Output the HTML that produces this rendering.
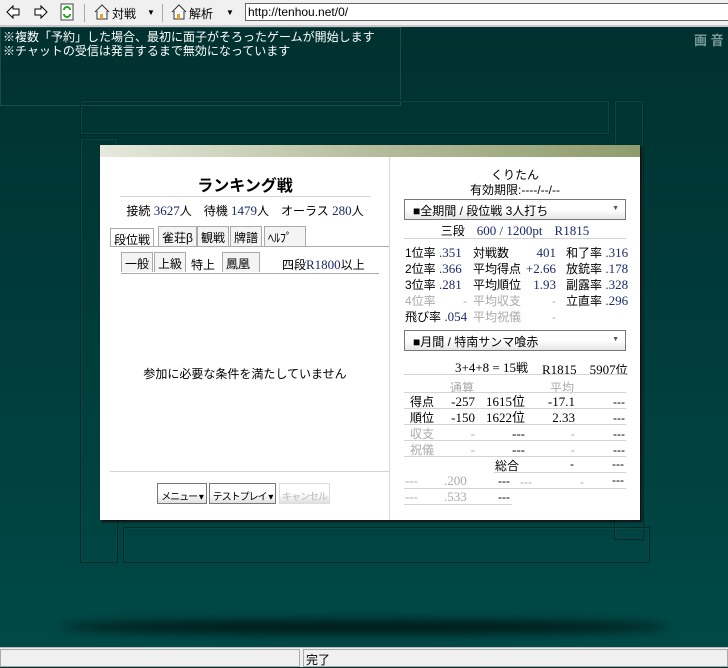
<!DOCTYPE html>
<html><head><meta charset="utf-8"><style>
*{margin:0;padding:0;box-sizing:border-box}
body{width:728px;height:667px;overflow:hidden;position:relative;font-family:"Liberation Sans","Noto Sans CJK JP",sans-serif;font-size:12px;background:linear-gradient(#00302f,#003c3a 50%,#004a48)}
.a{position:absolute;white-space:nowrap}
.tb{position:absolute;left:0;top:0;width:728px;height:27px;background:#f0f0f0;border-bottom:2px solid #c8c8c8}
.url{position:absolute;left:245px;top:3px;width:483px;height:18px;background:#fff;border:1px solid #666;border-right:none;font-size:12px;padding:1px 2px}
.chat{position:absolute;left:0;top:27px;width:401px;height:79px;border:1px solid #1f4a46;color:#fff;font-size:12px;line-height:14px;padding:2px 2px}
.frm{position:absolute;border:1px solid #002a28;box-shadow:inset 0 0 0 1px #0a4644}
.panel{position:absolute;left:100px;top:145px;width:540px;height:375px;background:#fff;box-shadow:2px 2px 2px #111}
.hd{position:absolute;left:0;top:0;width:540px;height:12px;background:linear-gradient(90deg,#e6e9dc,#b4bd9c 50%,#8f9c6c)}
.n{color:#1a2a6a;font-family:"Liberation Serif",serif;font-size:13px}
.ln{position:absolute;height:1px;background:#d4d4d4}
.sel{position:absolute;height:21px;border:1px solid #777;background:linear-gradient(#fff,#fff 50%,#e6e6e6);padding:2px 8px;font-size:12px}
.sel:after{content:"▼";position:absolute;right:6px;top:5px;font-size:7px;color:#555}
.g{color:#aaa}
.s{font-family:"Liberation Serif",serif;font-size:13px}
.tab{position:absolute;top:226px;height:20px;border:1px solid #aaa;border-bottom:none;background:#f4f4f4;padding:2px 3px;font-size:12px}
.btn{position:absolute;top:483px;height:21px;border:1px solid #777;background:linear-gradient(#fff,#fff 50%,#e0e0e0);font-size:10px;padding:4px 0;text-align:center;white-space:nowrap;letter-spacing:-1px;overflow:hidden}
.status{position:absolute;left:0;top:647px;width:728px;height:20px;background:#f0f0f0;border-top:1px solid #bbb}
</style></head><body>
<div class="tb">
<svg class="a" style="left:6px;top:5px" width="14" height="14"><path d="M1 7L7 1V4H13V10H7V13Z" fill="#fff" stroke="#000"/></svg>
<svg class="a" style="left:34px;top:5px" width="14" height="14"><path d="M13 7L7 1V4H1V10H7V13Z" fill="#fff" stroke="#000"/></svg>
<svg class="a" style="left:60px;top:3px" width="14" height="18"><rect x="1" y="1" width="12" height="16" fill="#fff" stroke="#444"/><path d="M4 7a3 3 0 0 1 6 0M10 11a3 3 0 0 1-6 0" stroke="#2a2" stroke-width="2" fill="none"/></svg>
<div class="a" style="left:84px;top:4px;width:1px;height:18px;background:#aaa"></div>
<svg class="a" style="left:94px;top:4px" width="16" height="16"><path d="M1 8L8 1L15 8M3 7V15H13V7" fill="#fff" stroke="#333"/><rect x="6" y="10" width="3" height="5" fill="#e8a020"/></svg>
<div class="a" style="left:112px;top:5px;font-size:12px">対戦</div><div class="a" style="left:147px;top:8px;font-size:8px">▼</div>
<div class="a" style="left:162px;top:4px;width:1px;height:18px;background:#aaa"></div>
<svg class="a" style="left:171px;top:4px" width="16" height="16"><path d="M1 8L8 1L15 8M3 7V15H13V7" fill="#fff" stroke="#333"/><rect x="6" y="10" width="3" height="5" fill="#e8a020"/></svg>
<div class="a" style="left:189px;top:5px;font-size:12px">解析</div><div class="a" style="left:226px;top:8px;font-size:8px">▼</div>
<div class="url">http://tenhou.net/0/</div>
</div>
<div class="chat">※複数「予約」した場合、最初に面子がそろったゲームが開始します<br>※チャットの受信は発言するまで無効になっています</div>
<div class="a" style="left:694px;top:30px;color:#7a9a96;font-size:13px;font-weight:bold">画 音</div>
<div class="frm" style="left:80px;top:100px;width:530px;height:35px"></div>
<div class="frm" style="left:614px;top:100px;width:30px;height:440px"></div>
<div class="frm" style="left:80px;top:138px;width:38px;height:425px"></div>
<div class="frm" style="left:123px;top:527px;width:527px;height:36px"></div>
<div class="a" style="left:60px;top:620px;width:610px;height:14px;border-radius:50%;background:#001a18;filter:blur(5px)"></div>
<div class="panel"><div class="hd"></div>
<div class="a" style="left:289px;top:12px;width:1px;height:363px;background:#d8d8d8"></div></div>
<!-- left -->
<div class="a" style="left:120px;top:172px;width:250px;text-align:center;font-size:16px;font-weight:bold">ランキング戦</div>
<div class="ln" style="left:120px;top:196px;width:250px"></div>
<div class="a" style="left:120px;top:202px;width:250px;text-align:center">接続 <span class="n">3627</span>人　待機 <span class="n">1479</span>人　オーラス <span class="n">280</span>人</div>
<div class="tab" style="left:110px;top:228px;background:#fff;height:19px">段位戦</div>
<div class="tab" style="left:158px">雀荘β</div>
<div class="tab" style="left:197px">観戦</div>
<div class="tab" style="left:230px">牌譜</div>
<div class="tab" style="left:264px;width:42px">ﾍﾙﾌﾟ</div>
<div class="ln" style="left:110px;top:246px;width:279px;background:#aaa"></div>
<div class="tab" style="left:121px;top:252px">一般</div>
<div class="tab" style="left:154px;top:252px">上級</div>
<div class="tab" style="left:188px;top:254px;background:#fff;border:none">特上</div>
<div class="tab" style="left:222px;top:252px;width:38px">鳳凰</div>
<div class="a" style="left:282px;top:256px">四段<span class="n">R1800</span>以上</div>
<div class="ln" style="left:121px;top:273px;width:258px;background:#aaa"></div>
<div class="a" style="left:120px;top:365px;width:250px;text-align:center">参加に必要な条件を満たしていません</div>
<div class="ln" style="left:110px;top:471px;width:279px"></div>
<div class="btn" style="left:157px;width:50px">メニュー ▾</div>
<div class="btn" style="left:209px;width:67px">テストプレイ ▾</div>
<div class="btn" style="left:279px;width:51px;border-color:#ddd;color:#bbb">キャンセル</div>
<!-- right -->
<div class="a" style="left:400px;top:166px;width:230px;text-align:center">くりたん</div>
<div class="a" style="left:400px;top:181px;width:230px;text-align:center">有効期限:----/--/--</div>
<div class="sel" style="left:404px;top:199px;width:222px">■全期間 / 段位戦 3人打ち</div>
<div class="a" style="left:400px;top:222px;width:230px;text-align:center">三段　<span class="n">600 / 1200pt</span>　<span class="n">R1815</span></div>
<div class="ln" style="left:404px;top:238px;width:222px"></div>
<div class="a" style="left:405px;top:245px;line-height:16px">1位率 <span class="n">.351</span><br>2位率 <span class="n">.366</span><br>3位率 <span class="n">.281</span><br><span class="g">4位率　　 -</span><br>飛び率 <span class="n">.054</span></div>
<div class="a" style="left:473px;top:245px;line-height:16px">対戦数<br>平均得点<br>平均順位<br><span class="g">平均収支</span><br><span class="g">平均祝儀</span></div>
<div class="a" style="left:496px;top:245px;width:60px;text-align:right;line-height:16px"><span class="n">401</span><br><span class="n">+2.66</span><br><span class="n">1.93</span><br><span class="g">-</span><br><span class="g">-</span></div>
<div class="a" style="left:566px;top:245px;line-height:16px">和了率 <span class="n">.316</span><br>放銃率 <span class="n">.178</span><br>副露率 <span class="n">.328</span><br>立直率 <span class="n">.296</span></div>
<div class="sel" style="left:404px;top:330px;width:222px">■月間 / 特南サンマ喰赤</div>
<div class="a s" style="left:455px;top:359px">3+4+8 = 15<span style="font-family:'Liberation Sans','Noto Sans CJK JP',sans-serif;font-size:12px">戦</span></div>
<div class="a s" style="left:542px;top:359px">R1815　5907<span style="font-family:'Liberation Sans','Noto Sans CJK JP',sans-serif;font-size:12px">位</span></div>
<div class="ln" style="left:404px;top:374px;width:222px"></div>
<div class="a g" style="left:450px;top:379px">通算</div><div class="a g" style="left:550px;top:379px">平均</div>
<div class="a" style="left:410px;top:394px;line-height:16px">得点<br>順位<br><span class="g">収支</span><br><span class="g">祝儀</span></div>
<div class="a s" style="left:445px;top:394px;width:30px;text-align:right;line-height:16px">-257<br>-150<br><span class="g">-</span><br><span class="g">-</span></div>
<div class="a s" style="left:480px;top:394px;width:45px;text-align:right;line-height:16px">1615位<br>1622位<br>---<br>---</div>
<div class="a s" style="left:535px;top:394px;width:40px;text-align:right;line-height:16px">-17.1<br>2.33<br><span class="g">-</span><br><span class="g">-</span></div>
<div class="a" style="left:595px;top:394px;width:30px;text-align:right;line-height:16px">---<br>---<br>---<br>---</div>
<div class="a" style="left:495px;top:457px">総合</div><div class="a" style="left:570px;top:457px">-</div><div class="a" style="left:612px;top:457px">---</div>
<div class="a g s" style="left:405px;top:473px;line-height:16px">---　　.200<br>---　　.533</div>
<div class="a" style="left:498px;top:473px;line-height:16px">---<br>---</div>
<div class="a g" style="left:520px;top:473px">---　　　　-</div><div class="a" style="left:612px;top:473px">---</div>
<div class="ln" style="left:404px;top:392px;width:222px"></div>
<div class="ln" style="left:404px;top:408px;width:222px"></div>
<div class="ln" style="left:404px;top:424px;width:222px"></div>
<div class="ln" style="left:404px;top:440px;width:222px"></div>
<div class="ln" style="left:404px;top:456px;width:222px"></div>
<div class="ln" style="left:494px;top:472px;width:132px"></div>
<div class="ln" style="left:404px;top:488px;width:222px"></div>
<div class="ln" style="left:404px;top:504px;width:108px"></div>
<div class="status"><div class="a" style="left:0;top:1px;width:300px;height:18px;border:1px solid #aaa"></div><div class="a" style="left:303px;top:1px;width:425px;height:18px;border:1px solid #aaa;padding:1px 2px">完了</div></div>
</body></html>
